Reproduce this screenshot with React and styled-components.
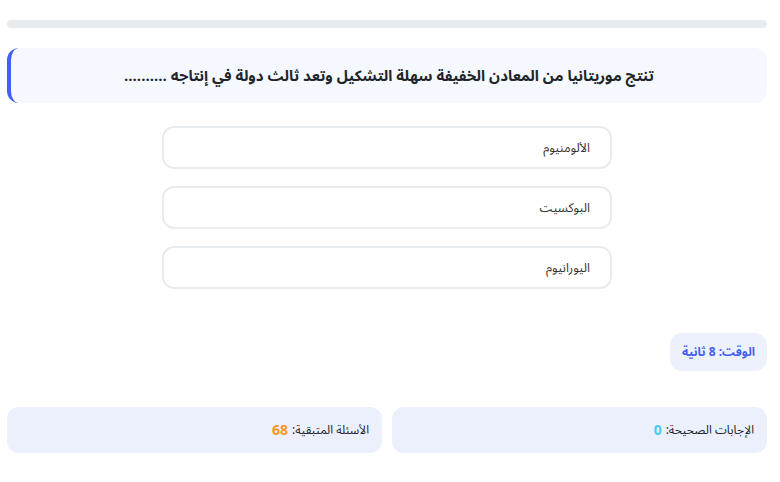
import styled, { createGlobalStyle } from "styled-components"

const Global = createGlobalStyle`
  body {
    margin: 0;
    background: #fff;
    font-family: "Noto Sans Arabic", "Liberation Sans", "DejaVu Sans", sans-serif;
  }
`

const Page = styled.div`
  direction: rtl;
  padding: 20px 13px 0 7px;
  display: flex;
  flex-direction: column;
`

const Progress = styled.div`
  height: 8px;
  border-radius: 4px;
  background: #e9ecef;
  overflow: hidden;
`

const Fill = styled.div`
  height: 100%;
  background: #4361ee;
`

const Question = styled.div`
  margin-top: 20px;
  height: 55px;
  box-sizing: border-box;
  background: #f5f8ff;
  border-radius: 12px;
  border-left: 4px solid #4361ee;
  display: flex;
  align-items: center;
  justify-content: center;
  font-size: 15px;
  font-weight: bold;
  color: #212529;
`

const Options = styled.div`
  margin-top: 23px;
  display: flex;
  flex-direction: column;
  align-items: center;
  gap: 17px;
`

const Option = styled.button`
  width: 450px;
  height: 43px;
  box-sizing: border-box;
  border: 2px solid #e9ecef;
  border-radius: 12px;
  background: #fff;
  direction: rtl;
  text-align: right;
  padding: 0 20px;
  font-family: inherit;
  font-size: 12.5px;
  color: #333;
  cursor: pointer;
`

const TimerRow = styled.div`
  margin-top: 44px;
  display: flex;
`

const Timer = styled.div`
  height: 38px;
  padding: 0 12px;
  display: flex;
  align-items: center;
  background: #edf0fd;
  border-radius: 12px;
  color: #4361ee;
  font-size: 12px;
  font-weight: bold;
`

const Stats = styled.div`
  margin-top: 36px;
  display: grid;
  grid-template-columns: 1fr 1fr;
  gap: 10px;
`

const Stat = styled.div`
  height: 46px;
  padding: 0 13px;
  display: flex;
  align-items: center;
  background: #ecf0fd;
  border-radius: 12px;
  font-size: 12px;
  color: #212529;
`

const Num = styled.span`
  font-weight: bold;
  font-size: 14px;
  margin-right: 4px;
  color: ${p => p.color};
`

const options = ["الألومنيوم", "البوكسيت", "اليورانيوم"]

export default function App() {
  return (
    <>
      <Global />
      <Page>
        <Progress>
          <Fill style={{ width: "0%" }} />
        </Progress>
        <Question>تنتج موريتانيا من المعادن الخفيفة سهلة التشكيل وتعد ثالث دولة في إنتاجه ..........</Question>
        <Options>
          {options.map(o => (
            <Option key={o}>{o}</Option>
          ))}
        </Options>
        <TimerRow>
          <Timer>الوقت: 8 ثانية</Timer>
        </TimerRow>
        <Stats>
          <Stat>
            الإجابات الصحيحة: <Num color="#4cc9f0">0</Num>
          </Stat>
          <Stat>
            الأسئلة المتبقية: <Num color="#f8961e">68</Num>
          </Stat>
        </Stats>
      </Page>
    </>
  )
}
